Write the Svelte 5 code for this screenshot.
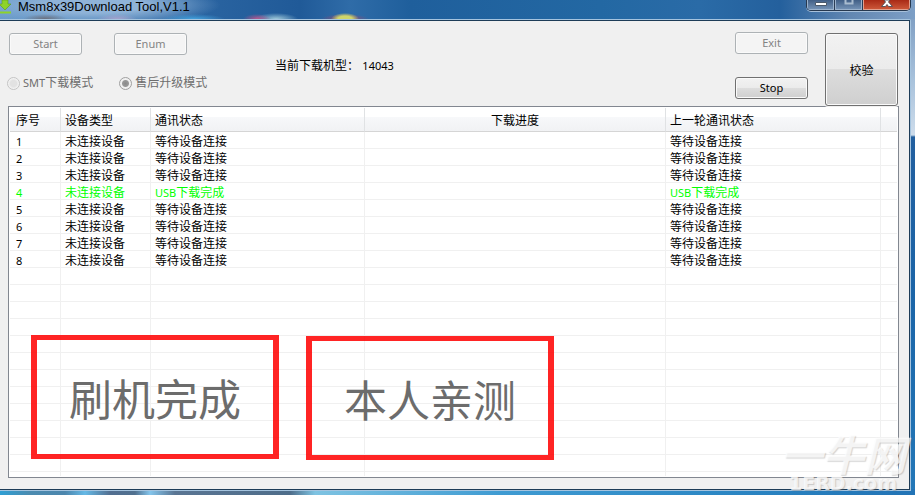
<script>
  const waiting = '等待设备连接';
  const devices = Array.from({ length: 8 }, (_, i) => ({
    id: i + 1,
    type: '未连接设备',
    latin: i === 3 ? 'USB' : '',
    status: i === 3 ? '下载完成' : waiting,
    done: i === 3
  }));
  const blanks = Array.from({ length: 12 }, (_, i) => i);
  let mode = $state('service');
</script>

<div class="desktop">
  <header class="titlebar">
    <svg class="app-icon" width="12" height="14" viewBox="0 0 12 14" aria-hidden="true">
      <path d="M2 0h6v4h3L5 10-1 4h3z" fill="#8ed329" stroke="#5a9e18" stroke-width=".6" />
      <path d="M0 11.500h11v2H0z" fill="#8ed329" />
    </svg>
    <h1>Msm8x39Download Tool,V1.1</h1>
    <div class="window-buttons">
      <button class="min" aria-label="Minimize">
        <svg width="12" height="7" viewBox="0 0 12 7"><path d="M.5 2.500h11v3H.5z" fill="#fff" stroke="#4b596b" /></svg>
      </button>
      <button class="max" aria-label="Maximize" disabled>
        <svg width="12" height="7" viewBox="0 0 12 7"><path d="M2.500 0v3.500h7V0" fill="none" stroke="#a9bccf" stroke-width="2" /></svg>
      </button>
      <button class="close" aria-label="Close">
        <svg width="14" height="8" viewBox="0 0 14 8"><path d="M4 0l1.500 2L1.500 6.500h4L7 4.500l1.500 2h4L8.500 2 10 0z" fill="#fff" stroke="#4e4a55" stroke-width=".9" /></svg>
      </button>
    </div>
  </header>

  <main class="window">
    <div class="client">
      <section class="toolbar">
        <div class="controls">
          <div class="commands">
            <button class="btn" disabled>Start</button>
            <button class="btn" disabled>Enum</button>
          </div>
          <div class="modes">
            <label><input type="radio" name="mode" value="smt" bind:group={mode} disabled /><span><span class="latin">SMT</span>下载模式</span></label>
            <label><input type="radio" name="mode" value="service" bind:group={mode} disabled /><span>售后升级模式</span></label>
          </div>
        </div>
        <p class="model">当前下载机型： <span class="latin">14043</span></p>
        <div class="actions">
          <button class="btn" disabled>Exit</button>
          <button class="btn">Stop</button>
        </div>
        <button class="btn verify">校验</button>
      </section>

      <section class="list">
        <table>
          <colgroup>
            <col class="c-id" /><col class="c-type" /><col class="c-status" /><col /><col class="c-last" /><col class="c-end" />
          </colgroup>
          <thead>
            <tr>
              <th>序号</th><th>设备类型</th><th>通讯状态</th><th class="progress">下载进度</th><th>上一轮通讯状态</th><th></th>
            </tr>
          </thead>
          <tbody>
            {#each devices as d (d.id)}
              <tr class:done={d.done}>
                <td><span class="latin">{d.id}</span></td>
                <td>{d.type}</td>
                <td><span class="latin">{d.latin}</span>{d.status}</td>
                <td></td>
                <td><span class="latin">{d.latin}</span>{d.status}</td>
                <td></td>
              </tr>
            {/each}
            {#each blanks as b (b)}
              <tr><td></td><td></td><td></td><td></td><td></td><td></td></tr>
            {/each}
            <tr class="tail"><td></td><td></td><td></td><td></td><td></td><td></td></tr>
          </tbody>
        </table>
        <div class="note first">刷机完成</div>
        <div class="note second">本人亲测</div>
      </section>
    </div>
  </main>

  <div class="watermark" aria-hidden="true">
    <span class="brand">一牛网</span>
    <span class="site">1ERD.com</span>
  </div>
</div>

<style>
  :global(body) { margin: 0; }
  .desktop {
    position: relative;
    box-sizing: border-box;
    min-height: 100vh;
    overflow: hidden;
    font: 12px/16px "Liberation Sans", "Noto Sans CJK SC", sans-serif;
    color: #000;
    background:
      linear-gradient(90deg, #2f9fd4 0, #4b8bb0 30px, #4c86ad 65px, #65b9e6 85px, #526f91 110px, #50708f 135px, #84c5ec 150px, #5a7593 175px, #4e6d8a 290px, #7ec3e2 315px, #3f9bd2 500px, #2c87c4 720px, #2273b5 100%) bottom / 100% 6px no-repeat,
      linear-gradient(#7596bd 0, #a8c2dc 80px, #cddceb 135px, #225f9f 137px, #1b65a8 300px, #2478b8 100%);
  }
  .latin { font-family: "Noto Sans", sans-serif; font-size: 11px; }

  .titlebar {
    display: flex;
    align-items: flex-start;
    height: 19px;
    background:
      radial-gradient(ellipse 22px 5px at 45px 19px, #6b6f7c, transparent),
      radial-gradient(ellipse 20px 5px at 117px 19px, #a7a3cd, transparent),
      radial-gradient(ellipse 32px 5px at 193px 19px, #43a1dc, transparent),
      radial-gradient(ellipse 14px 5px at 257px 19px, #b8568d, transparent),
      radial-gradient(ellipse 22px 6px at 276px 19px, #9fc9d9, transparent),
      radial-gradient(ellipse 14px 6px at 345px 19px, #cfd66b 50%, transparent),
      radial-gradient(ellipse 24px 5px at 345px 19px, #a4476c, transparent),
      radial-gradient(ellipse 125px 20px at 95px 5px, #8fb3d8 40%, #8fb3d800),
      linear-gradient(90deg, #6b9ccb 0, #2a64a1 200px, #205a98 300px, #2f6ca8 350px, #1f5f9c 410px, #2368a3 600px, #2a6ba7 700px, #24609d 780px, #6287b2 850px, #7d9fc6 100%);
  }
  .app-icon { flex: none; }
  h1 {
    margin: 0 0 0 6px;
    font: 13px/13px "Liberation Sans", sans-serif;
    white-space: nowrap;
  }
  .window-buttons {
    display: flex;
    margin: 0 4px 0 auto;
    height: 10px;
    border: 1px solid #26384f;
    border-top: 0;
    border-radius: 0 0 5px 5px;
    overflow: hidden;
    box-shadow: 0 1px #a7c0da;
  }
  .window-buttons button {
    display: flex;
    justify-content: center;
    align-items: flex-start;
    box-sizing: border-box;
    width: 28px;
    padding: 0;
    border: 0;
    border-right: 1px solid #2a3c55;
    background: linear-gradient(#415f86, #7896b9);
    box-shadow: inset -1px -1px #9bb2cc, inset 1px 0 #9bb2cc;
  }
  .window-buttons .close {
    width: 47px;
    border: 0;
    background: linear-gradient(#a92a16, #cf5b3c);
    box-shadow: inset -1px -1px #e2a08e, inset 1px 0 #e2a08e;
  }

  .window {
    margin: 0 4px 4px 0;
    border: 1px solid #a5c4df;
    border-left: 0;
    border-top-right-radius: 2px;
  }
  .client {
    border: 1px solid #1d3c57;
    border-left: 0;
    padding: 0 10px 11px 8px;
    background: #f0f0f0;
  }
  .toolbar {
    display: flex;
    align-items: flex-start;
    height: 85px;
  }
  .controls {
    display: grid;
    row-gap: 20px;
    width: 210px;
    padding: 12px 0 0 1px;
  }
  .commands { display: flex; gap: 32px; }
  .modes { display: flex; gap: 26px; margin-left: -2px; }
  .modes label {
    display: flex;
    align-items: center;
    gap: 3px;
    color: #6d6d6d;
    white-space: nowrap;
  }
  input {
    appearance: none;
    width: 13px;
    height: 13px;
    margin: 0;
    border: 1px solid #c4c4c4;
    border-radius: 50%;
    background: radial-gradient(#e2e2e2 40%, #f8f8f8 75%);
  }
  input:checked {
    border-color: #a0a0a0;
    background: radial-gradient(#8a8a8a 0, #999 3px, #f0f0f0 4px);
  }
  .model { margin: 37px 0 0 56px; white-space: pre; }
  .actions {
    display: grid;
    row-gap: 23px;
    margin-left: auto;
    padding-top: 11px;
  }
  .btn {
    box-sizing: border-box;
    width: 73px;
    height: 22px;
    padding: 0;
    border: 1px solid #707070;
    border-radius: 3px;
    background: linear-gradient(#f2f2f2, #ebebeb 49%, #dddddd 50%, #cfcfcf);
    box-shadow: inset 0 0 0 1px #fafafa;
    color: #000;
    font: 11px/16px "Noto Sans", sans-serif;
  }
  .btn:disabled {
    border-color: #adb2b5;
    background: #f4f4f4;
    color: #838383;
  }
  .verify {
    position: relative;
    z-index: 1;
    height: 73px;
    margin: 12px 1px 0 17px;
    font: 12px/16px "Noto Sans CJK SC", sans-serif;
    box-shadow: inset 0 0 0 1px #fafafa, 0 0 0 1px #f0f0f0;
  }

  .list {
    position: relative;
    border: 1px solid #828790;
    padding: 1px;
    background: #fff;
  }
  table {
    width: 100%;
    border-collapse: separate;
    border-spacing: 0;
    table-layout: fixed;
  }
  .c-id { width: 51px; }
  .c-type { width: 90px; }
  .c-status { width: 214px; }
  .c-last { width: 215px; }
  .c-end { width: 16px; }
  th, td {
    box-sizing: border-box;
    padding: 4px 0 0 4px;
    border-right: 1px solid #f0f0f0;
    border-bottom: 1px solid #f0f0f0;
    text-align: left;
    font-weight: normal;
    white-space: nowrap;
  }
  td { height: 17px; line-height: 12px; }
  th {
    height: 24px;
    padding-top: 2px;
    border-right-color: #e0e2e4;
    border-bottom-color: #d5d5d5;
    background: linear-gradient(#fff 40%, #f7f8fa 41%, #f1f2f4);
  }
  th:first-child, td:first-child { padding-left: 6px; }
  th.progress { padding-left: 0; text-align: center; }
  th:last-child, td:last-child { border-right: 0; }
  .done { color: #0f0; }
  .tail td { height: 4px; padding: 0; line-height: 4px; border-bottom: 0; }

  .note {
    position: absolute;
    top: 228px;
    display: flex;
    align-items: center;
    justify-content: center;
    box-sizing: border-box;
    width: 248px;
    height: 124px;
    border: 6px solid rgba(255, 0, 0, .86);
    border-width: 5px 6px;
    color: #6c6c6c;
    font: 43px/60px "Noto Sans CJK SC", sans-serif;
  }
  .first { left: 22px; }
  .second { left: 297px; top: 229px; }

  .watermark {
    position: absolute;
    right: 9px;
    bottom: 2px;
    display: flex;
    flex-direction: column;
    align-items: center;
    color: rgba(255, 255, 255, .75);
    text-shadow: 1px 1px 1px rgba(110, 110, 110, .3);
    white-space: nowrap;
    pointer-events: none;
  }
  .brand { font: italic bold 42px/42px "Noto Sans CJK SC", sans-serif; }
  .site { font: bold 19px/19px "DejaVu Sans", sans-serif; }
</style>
